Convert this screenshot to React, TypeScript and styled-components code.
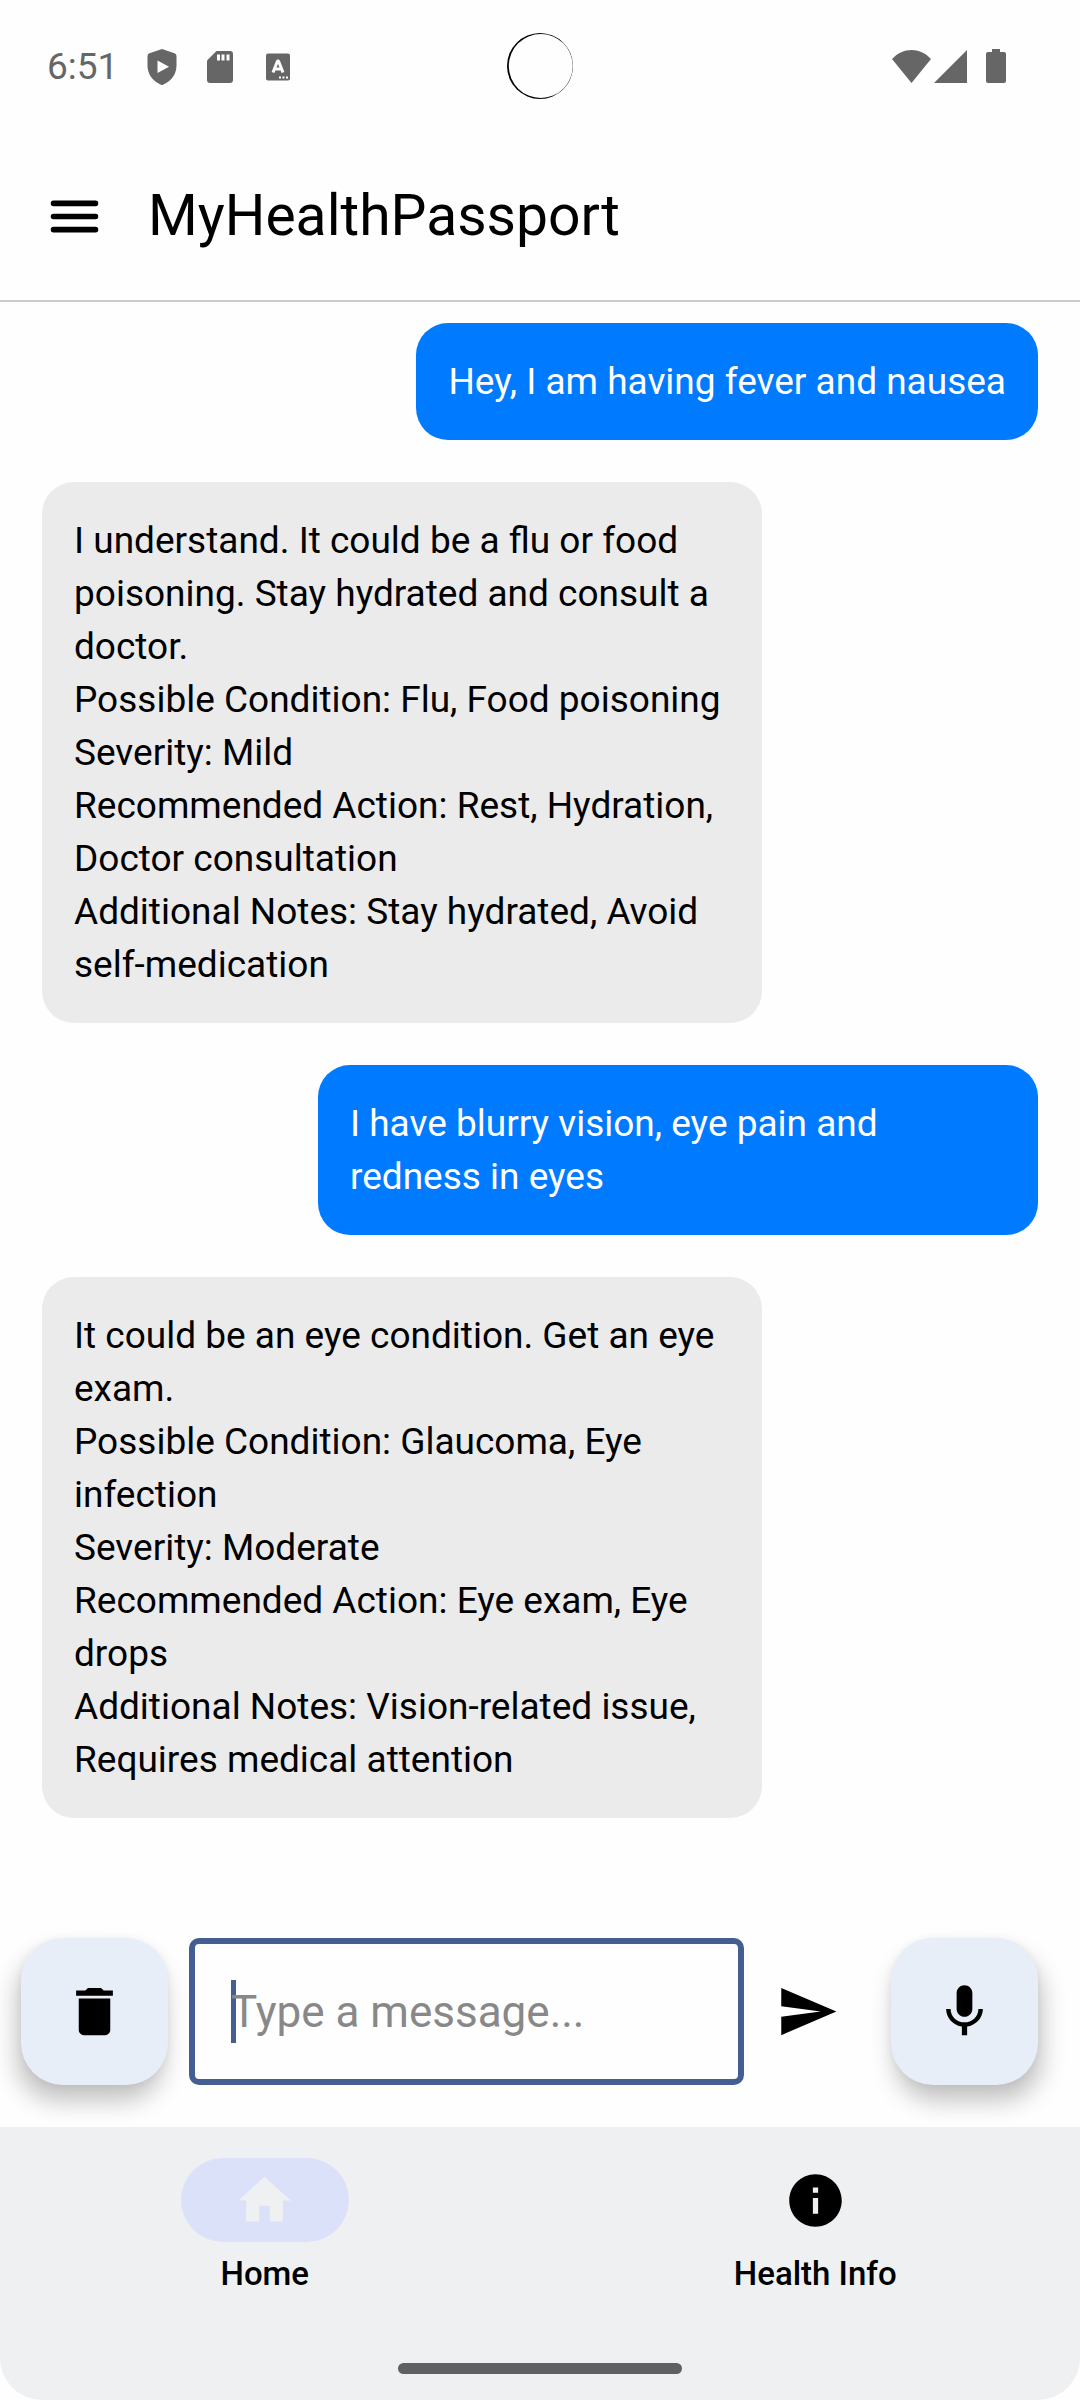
import React, { useState } from "react";
import styled, { createGlobalStyle } from "styled-components";

const color = {
  page: "#fefefe",
  ink: "#000000",
  status: "#666666",
  divider: "#cccccc",
  sent: "#007bff",
  received: "#ebebeb",
  primary: "#445e91",
  hint: "#888888",
  fab: "#e7eef8",
  nav: "#eff0f2",
  indicator: "#dce1fa",
  handle: "#606060",
};

const GlobalStyle = createGlobalStyle`
  *, *::before, *::after { box-sizing: border-box; }
  body {
    margin: 0;
    background: ${color.page};
    color: ${color.ink};
    font-family: Roboto, "Liberation Sans", sans-serif;
  }
  button, input { font: inherit; color: inherit; }
  svg { display: block; flex: none; }
`;

const Screen = styled.div`
  display: flex;
  flex-direction: column;
  min-height: 100vh;
`;

const StatusBar = styled.div`
  display: grid;
  grid-template-columns: 1fr auto 1fr;
  align-items: center;
  height: 132px;
  color: ${color.status};
`;

const StatusLeft = styled.div`
  display: flex;
  align-items: center;
  gap: 16px;
  padding: 2px 0 0 47px;
`;

const Clock = styled.time`
  width: 78px;
  font-size: 37px;
  line-height: 44px;
`;

const StatusRight = styled.div`
  display: flex;
  align-items: center;
  justify-content: flex-end;
  gap: 3px;
  padding-right: 74px;
`;

const BatterySlot = styled.span`
  padding-left: 16px;
`;

const AppBar = styled.header`
  display: flex;
  align-items: center;
  gap: 11px;
  height: 170px;
  padding: 0 11px;
  border-bottom: 2px solid ${color.divider};
`;

const IconButton = styled.button`
  display: flex;
  flex: none;
  align-items: center;
  justify-content: center;
  width: 126px;
  height: 126px;
  padding: 0;
  border: 0;
  background: none;
`;

const Title = styled.h1`
  margin: 0;
  font-size: 57px;
  font-weight: 400;
  line-height: 74px;
`;

const Messages = styled.main`
  display: flex;
  flex: 1;
  flex-direction: column;
  gap: 42px;
  padding: 21px 42px;
`;

const Bubble = styled.p<{ $sent: boolean }>`
  align-self: ${(p) => (p.$sent ? "flex-end" : "flex-start")};
  max-width: min(720px, 80%);
  margin: 0;
  padding: 32px;
  border-radius: 32px;
  background: ${(p) => (p.$sent ? color.sent : color.received)};
  color: ${(p) => (p.$sent ? "#ffffff" : color.ink)};
  font-size: 37px;
  line-height: 53px;
  white-space: pre-line;
`;

const Composer = styled.form`
  display: flex;
  align-items: center;
  padding: 0 42px 42px 21px;
`;

const Fab = styled.button<{ $shadowX: number }>`
  display: flex;
  flex: none;
  align-items: center;
  justify-content: center;
  width: 147px;
  height: 147px;
  padding: 0;
  border: 0;
  border-radius: 42px;
  background: ${color.fab};
  box-shadow:
    ${(p) => p.$shadowX}px 16px 24px rgba(0, 0, 0, 0.24),
    0 1px 8px rgba(0, 0, 0, 0.05);
`;

const Field = styled.label`
  position: relative;
  display: block;
  flex: 1;
  min-width: 0;
  margin-left: 21px;
`;

const Cursor = styled.span`
  position: absolute;
  top: 42px;
  left: 42px;
  width: 5px;
  height: 63px;
  background: ${color.primary};
`;

const TextInput = styled.input`
  position: relative;
  display: block;
  width: 100%;
  height: 147px;
  padding: 0 36px;
  border: 6px solid ${color.primary};
  border-radius: 10px;
  outline: 0;
  background: transparent;
  font-size: 44px;

  &::placeholder {
    color: ${color.hint};
    opacity: 1;
  }
`;

const SendButton = styled(IconButton)`
  margin-right: 21px;
`;

const BottomArea = styled.footer`
  border-radius: 0 0 42px 42px;
  background: ${color.nav};
`;

const NavBar = styled.nav`
  display: flex;
  gap: 21px;
  height: 210px;
  padding-top: 31px;
`;

const NavItem = styled.button`
  display: flex;
  flex: 1;
  flex-direction: column;
  align-items: center;
  gap: 11px;
  padding: 0;
  border: 0;
  background: none;
  font-size: 33px;
  font-weight: 500;
  line-height: 42px;
`;

const Indicator = styled.span<{ $active: boolean }>`
  display: flex;
  align-items: center;
  justify-content: center;
  width: 168px;
  height: 84px;
  border-radius: 42px;
  background: ${(p) => (p.$active ? color.indicator : "transparent")};
  color: ${(p) => (p.$active ? color.nav : color.ink)};
`;

const GestureArea = styled.div`
  display: flex;
  justify-content: center;
  height: 63px;
  padding-top: 26px;
`;

const Handle = styled.span`
  width: 284px;
  height: 11px;
  border-radius: 6px;
  background: ${color.handle};
`;

function Icon({ d }: { d: string }) {
  return (
    <svg width="63" height="63" viewBox="0 0 24 24" fill="currentColor" aria-hidden="true">
      <path d={d} />
    </svg>
  );
}

const paths = {
  trash: "M6 19c0 1.1.9 2 2 2h8c1.1 0 2-.9 2-2V7H6v12zM19 4h-3.5l-1-1h-5l-1 1H5v2h14V4z",
  send: "M2.01 21L23 12 2.01 3 2 10l15 2-15 2z",
  mic: "M12 14c1.66 0 2.99-1.34 2.99-3L15 5c0-1.66-1.34-3-3-3S9 3.34 9 5v6c0 1.66 1.34 3 3 3zm5.3-3c0 3-2.54 5.1-5.3 5.1S6.7 14 6.7 11H5c0 3.41 2.72 6.23 6 6.72V21h2v-3.28c3.28-.48 6-3.3 6-6.72h-1.7z",
  home: "M10 20v-6h4v6h5v-8h3L12 3 2 12h3v8z",
  info: "M12 2C6.48 2 2 6.48 2 12s4.48 10 10 10 10-4.48 10-10S17.52 2 12 2zm1 15h-2v-6h2v6zm0-8h-2V7h2v2z",
};

function MenuIcon() {
  return (
    <svg width="63" height="63" viewBox="0 0 24 24" aria-hidden="true">
      <path
        d="M4 7h16M4 12h16M4 17h16"
        fill="none"
        stroke="currentColor"
        strokeWidth="2.1"
        strokeLinecap="round"
      />
    </svg>
  );
}

function ShieldIcon() {
  return (
    <svg width="42" height="42" viewBox="0 0 42 42" aria-hidden="true">
      <path
        d="M21 3L33.5 7.2Q35.5 8 35.5 10V19.5C35.5 28.5 30 35.5 22 38.7Q21 39.2 20 38.7C12 35.5 6.5 28.5 6.5 19.5V10Q6.5 8 8.5 7.2Z"
        fill="currentColor"
      />
      <path d="M16.5 14.5V27L28 20.7Z" fill={color.page} />
    </svg>
  );
}

function SdCardIcon() {
  return (
    <svg width="42" height="42" viewBox="0 0 42 42" aria-hidden="true">
      <path d="M17.5 5H31Q34 5 34 8V34Q34 37 31 37H11Q8 37 8 34V14.5Z" fill="currentColor" />
      <path d="M18 8.5h3v6h-3zM22.5 8.5h3v6h-3zM27.5 8.5h3v6h-3z" fill={color.page} />
    </svg>
  );
}

function KeyboardIcon() {
  return (
    <svg width="42" height="42" viewBox="0 0 42 42" aria-hidden="true">
      <rect x="9" y="7.5" width="24" height="27" rx="2" fill="currentColor" />
      <path
        d="M16 26.500L20.200 15.800Q21 14.400 21.800 15.800L26 26.500M18 23H24"
        fill="none"
        stroke={color.page}
        strokeWidth="3"
      />
      <path d="M22 30.5h2v2h-2zM25.5 30.5h2v2h-2zM29 30.5h2v2h-2z" fill={color.page} />
    </svg>
  );
}

function CameraCutout() {
  return (
    <svg width="66" height="66" viewBox="0 0 66 66" aria-hidden="true">
      <circle cx="33" cy="33" r="33" fill="#000000" />
      <circle cx="33.8" cy="33" r="32" fill={color.page} />
    </svg>
  );
}

const messages = [
  { sent: true, text: "Hey, I am having fever and nausea" },
  {
    sent: false,
    text: `I understand. It could be a flu or food poisoning. Stay hydrated and consult a doctor.
Possible Condition: Flu, Food poisoning
Severity: Mild
Recommended Action: Rest, Hydration, Doctor consultation
Additional Notes: Stay hydrated, Avoid self-medication`,
  },
  { sent: true, text: "I have blurry vision, eye pain and redness in eyes" },
  {
    sent: false,
    text: `It could be an eye condition. Get an eye exam.
Possible Condition: Glaucoma, Eye infection
Severity: Moderate
Recommended Action: Eye exam, Eye drops
Additional Notes: Vision-related issue, Requires medical attention`,
  },
];

const tabs = [
  { label: "Home", icon: paths.home },
  { label: "Health Info", icon: paths.info },
];

export default function App() {
  const [draft, setDraft] = useState("");
  const [tab, setTab] = useState("Home");

  return (
    <Screen>
      <GlobalStyle />
      <StatusBar>
        <StatusLeft>
          <Clock>6:51</Clock>
          <ShieldIcon />
          <SdCardIcon />
          <KeyboardIcon />
        </StatusLeft>
        <CameraCutout />
        <StatusRight>
          <svg width="39" height="33" viewBox="0 0 39 33" aria-hidden="true">
            <path d="M0 9C11-3 28-3 39 9L19.5 33Z" fill="currentColor" />
          </svg>
          <svg width="33" height="33" viewBox="0 0 33 33" aria-hidden="true">
            <path d="M33 0V33H0Z" fill="currentColor" />
          </svg>
          <BatterySlot>
            <svg width="20" height="34" viewBox="0 0 20 34" aria-hidden="true">
              <path
                d="M6 0H14V3H18Q20 3 20 5V32Q20 34 18 34H2Q0 34 0 32V5Q0 3 2 3H6Z"
                fill="currentColor"
              />
            </svg>
          </BatterySlot>
        </StatusRight>
      </StatusBar>

      <AppBar>
        <IconButton type="button" aria-label="Open menu">
          <MenuIcon />
        </IconButton>
        <Title>MyHealthPassport</Title>
      </AppBar>

      <Messages>
        {messages.map((m) => (
          <Bubble key={m.text} $sent={m.sent}>
            {m.text}
          </Bubble>
        ))}
      </Messages>

      <Composer onSubmit={(e: React.FormEvent) => e.preventDefault()}>
        <Fab type="button" aria-label="Clear chat" $shadowX={-4}>
          <Icon d={paths.trash} />
        </Fab>
        <Field>
          {draft === "" && <Cursor />}
          <TextInput
            type="text"
            aria-label="Message"
            placeholder="Type a message..."
            value={draft}
            onChange={(e: React.ChangeEvent<HTMLInputElement>) => setDraft(e.target.value)}
          />
        </Field>
        <SendButton type="submit" aria-label="Send">
          <Icon d={paths.send} />
        </SendButton>
        <Fab type="button" aria-label="Voice input" $shadowX={4}>
          <Icon d={paths.mic} />
        </Fab>
      </Composer>

      <BottomArea>
        <NavBar>
          {tabs.map((t) => (
            <NavItem key={t.label} type="button" onClick={() => setTab(t.label)}>
              <Indicator $active={tab === t.label}>
                <Icon d={t.icon} />
              </Indicator>
              {t.label}
            </NavItem>
          ))}
        </NavBar>
        <GestureArea>
          <Handle />
        </GestureArea>
      </BottomArea>
    </Screen>
  );
}
